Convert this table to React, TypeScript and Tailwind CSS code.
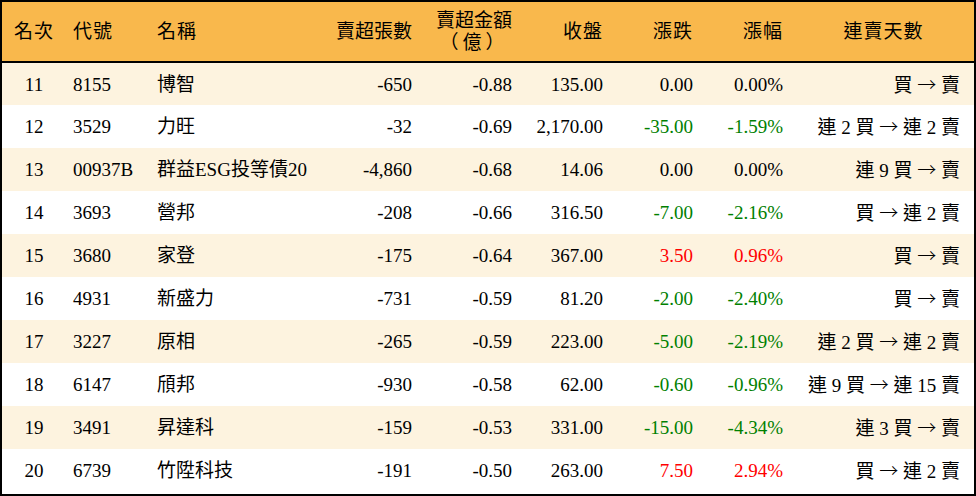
import React from "react";

type Row = {
  rank: number;
  code: string;
  name: string;
  lots: string;
  amount: string;
  close: string;
  change: string;
  pct: string;
  streak: string;
};

const rows: Row[] = [
  { rank: 11, code: "8155", name: "博智", lots: "-650", amount: "-0.88", close: "135.00", change: "0.00", pct: "0.00%", streak: "買 → 賣" },
  { rank: 12, code: "3529", name: "力旺", lots: "-32", amount: "-0.69", close: "2,170.00", change: "-35.00", pct: "-1.59%", streak: "連 2 買 → 連 2 賣" },
  { rank: 13, code: "00937B", name: "群益ESG投等債20", lots: "-4,860", amount: "-0.68", close: "14.06", change: "0.00", pct: "0.00%", streak: "連 9 買 → 賣" },
  { rank: 14, code: "3693", name: "營邦", lots: "-208", amount: "-0.66", close: "316.50", change: "-7.00", pct: "-2.16%", streak: "買 → 連 2 賣" },
  { rank: 15, code: "3680", name: "家登", lots: "-175", amount: "-0.64", close: "367.00", change: "3.50", pct: "0.96%", streak: "買 → 賣" },
  { rank: 16, code: "4931", name: "新盛力", lots: "-731", amount: "-0.59", close: "81.20", change: "-2.00", pct: "-2.40%", streak: "買 → 賣" },
  { rank: 17, code: "3227", name: "原相", lots: "-265", amount: "-0.59", close: "223.00", change: "-5.00", pct: "-2.19%", streak: "連 2 買 → 連 2 賣" },
  { rank: 18, code: "6147", name: "頎邦", lots: "-930", amount: "-0.58", close: "62.00", change: "-0.60", pct: "-0.96%", streak: "連 9 買 → 連 15 賣" },
  { rank: 19, code: "3491", name: "昇達科", lots: "-159", amount: "-0.53", close: "331.00", change: "-15.00", pct: "-4.34%", streak: "連 3 買 → 賣" },
  { rank: 20, code: "6739", name: "竹陞科技", lots: "-191", amount: "-0.50", close: "263.00", change: "7.50", pct: "2.94%", streak: "買 → 連 2 賣" },
];

function tone(v: string) {
  const n = parseFloat(v);
  if (n > 0) return "text-[#ff0000]";
  if (n < 0) return "text-[#008000]";
  return "text-black";
}

// the arrow comes out tiny in Liberation Serif, use the CJK full-width one
function Streak({ text }: { text: string }) {
  const [from, to] = text.split(" → ");
  return (
    <>
      {from}{" "}
      <span style={{ fontFamily: '"Noto Sans CJK TC", sans-serif' }} className="font-light">→</span>{" "}
      {to}
    </>
  );
}

export default function App() {
  return (
    <div
      className="w-[976px] h-[496px] bg-white border-2 border-black text-black text-[19px] leading-none"
      style={{ fontFamily: '"Liberation Serif", "Noto Sans CJK TC", serif' }}
    >
      <table className="w-full table-fixed border-collapse">
        <colgroup>
          <col className="w-[64px]" />
          <col className="w-[84px]" />
          <col className="w-[170px]" />
          <col className="w-[102px]" />
          <col className="w-[100px]" />
          <col className="w-[91px]" />
          <col className="w-[90px]" />
          <col className="w-[90px]" />
          <col className="w-[181px]" />
        </colgroup>
        <thead>
          <tr className="h-[60px] bg-[#f9b84c] border-b-2 border-black">
            <th className="font-normal text-center tracking-[1px]">名次</th>
            <th className="font-normal text-left pl-[7px] tracking-[1px]">代號</th>
            <th className="font-normal text-left pl-[7px] tracking-[1px]">名稱</th>
            <th className="font-normal text-right pr-[10px]">賣超張數</th>
            <th className="font-normal text-right pr-[10px]">
              <span className="inline-block text-center leading-[22px]">
                賣超金額
                <br />
                <span className="tracking-[4px]">（億）</span>
              </span>
            </th>
            <th className="font-normal text-right pr-[10px] tracking-[1px]">收盤</th>
            <th className="font-normal text-right pr-[10px] tracking-[1px]">漲跌</th>
            <th className="font-normal text-right pr-[10px] tracking-[1px]">漲幅</th>
            <th className="font-normal text-center tracking-[1px]">連賣天數</th>
          </tr>
        </thead>
        <tbody>
          {rows.map((r, i) => (
            <tr key={r.rank} className={i % 2 === 0 ? "h-[43px] bg-[#fdf3df]" : "h-[43px] bg-white"}>
              <td className="text-center">{r.rank}</td>
              <td className="pl-[7px]">{r.code}</td>
              <td className="pl-[7px] whitespace-nowrap">{r.name}</td>
              <td className="text-right pr-[10px]">{r.lots}</td>
              <td className="text-right pr-[10px]">{r.amount}</td>
              <td className="text-right pr-[10px]">{r.close}</td>
              <td className={`text-right pr-[10px] ${tone(r.change)}`}>{r.change}</td>
              <td className={`text-right pr-[10px] ${tone(r.pct)}`}>{r.pct}</td>
              <td className="text-right pr-[14px] whitespace-nowrap">
                <Streak text={r.streak} />
              </td>
            </tr>
          ))}
        </tbody>
      </table>
    </div>
  );
}
